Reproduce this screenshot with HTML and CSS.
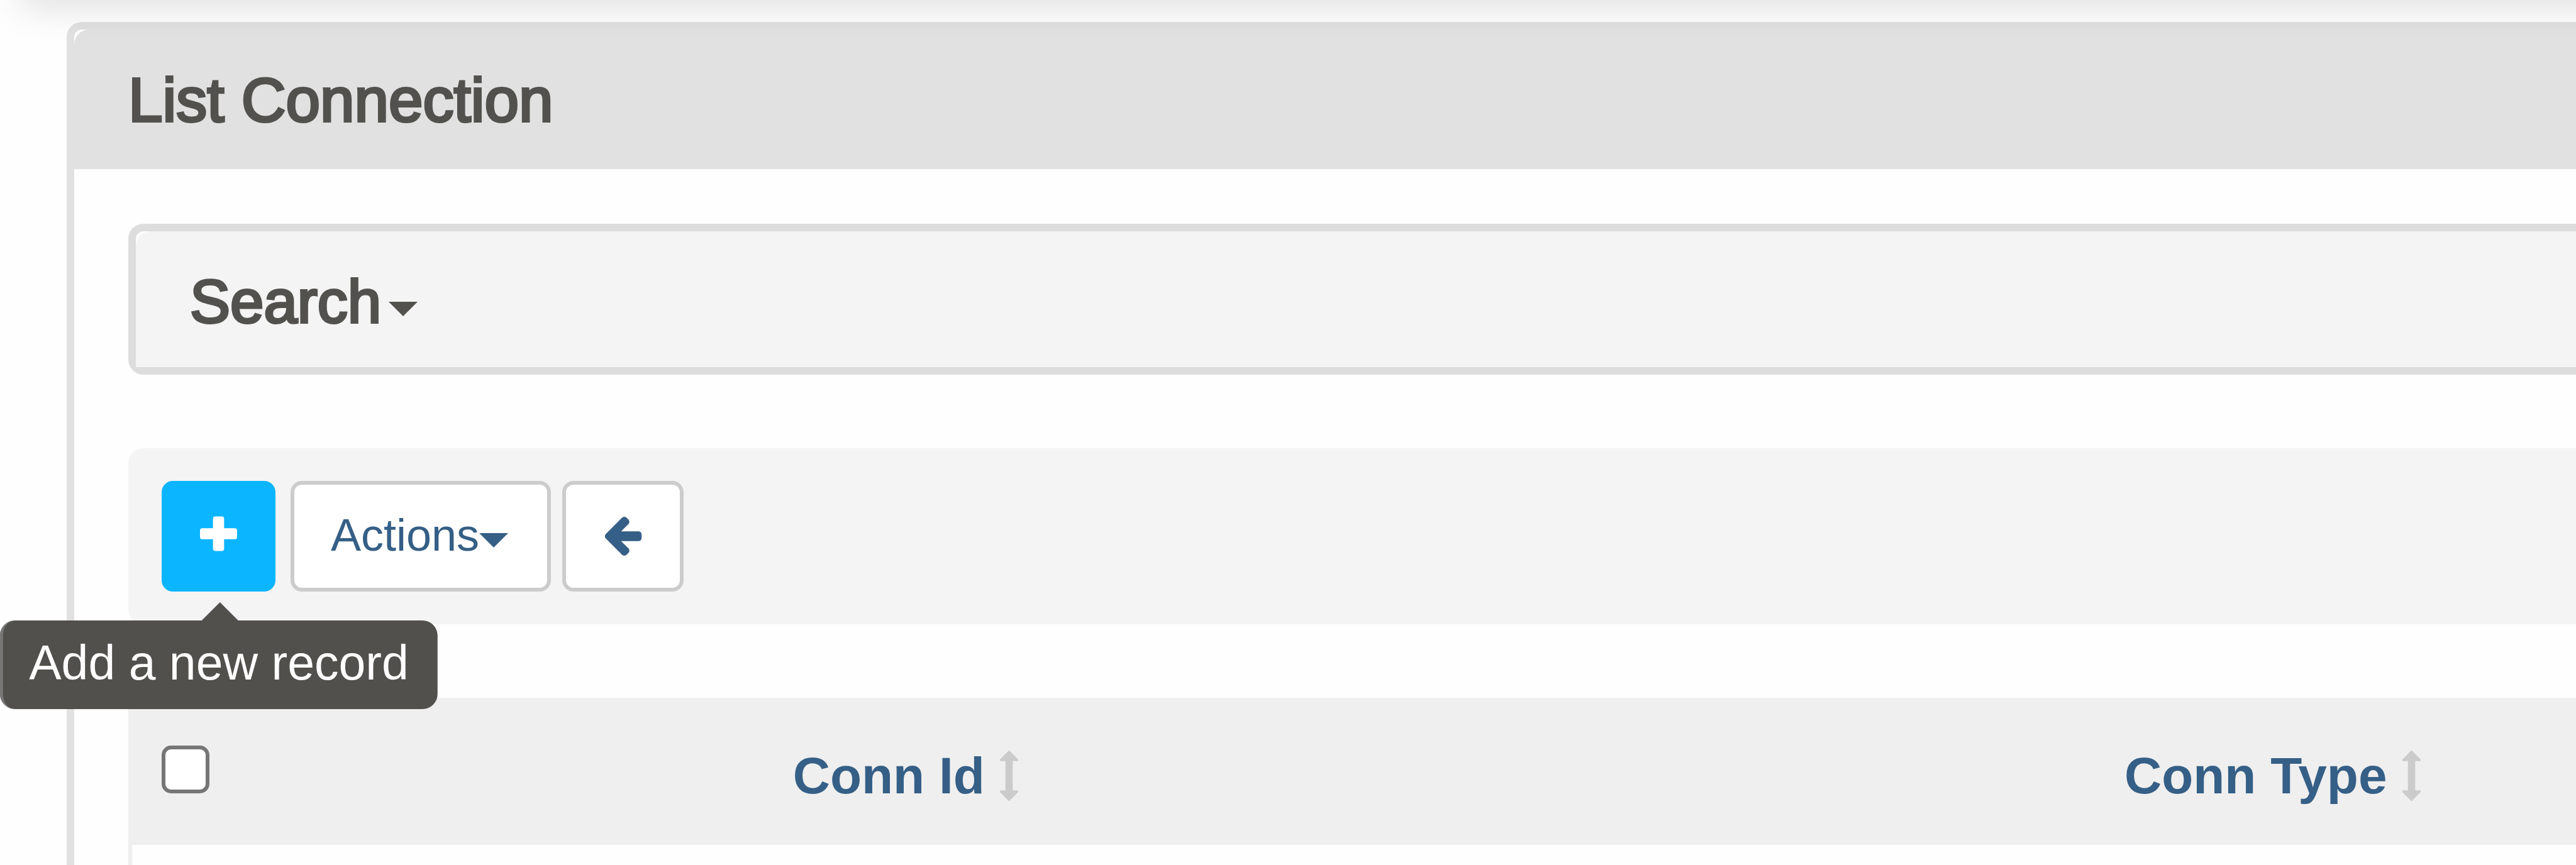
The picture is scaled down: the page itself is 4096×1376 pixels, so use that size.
FILE: index.html
```html
<!DOCTYPE html>
<html lang="en">
<head>
<meta charset="utf-8">
<title>List Connection</title>
<link rel="stylesheet" href="styles.css">
</head>
<body>
<div class="nav-shadow"></div>
<main class="panel">
  <h1 class="panel-title">List Connection</h1>
  <div class="panel-body">
    <div class="search">
      <button type="button" class="search-toggle">Search<span class="caret"></span></button>
    </div>

    <div class="toolbar">
      <div class="add">
        <button type="button" class="btn btn-add" aria-label="Add" aria-describedby="add-tip">
          <svg class="icon-plus" viewBox="0 0 60 56" aria-hidden="true"><path d="M25 0h10q4 0 4 4v15h17q4 0 4 4v10q0 4-4 4H39v15q0 4-4 4H25q-4 0-4-4V37H4q-4 0-4-4V23q0-4 4-4h17V4q0-4 4-4z"/></svg>
        </button>
        <div class="tooltip" id="add-tip" role="tooltip">Add a new record</div>
      </div>
      <button type="button" class="btn btn-actions">Actions<span class="caret"></span></button>
      <button type="button" class="btn btn-back" aria-label="Back">
        <svg class="icon-back" viewBox="64 180 1472 1560" aria-hidden="true"><path d="M1536 896v128q0 53-32.5 90.5t-84.5 37.5h-704l293 294q38 36 38 90t-38 90l-75 76q-37 37-90 37-52 0-91-37l-651-652q-37-37-37-90 0-52 37-91l651-650q38-38 91-38 52 0 90 38l75 74q38 38 38 91t-38 91l-293 293h704q52 0 84.5 37.5t32.5 90.5z"/></svg>
      </button>
    </div>

    <table class="list">
      <thead>
        <tr>
          <th class="col-check"><input type="checkbox" class="check" aria-label="Select all records"></th>
          <th class="col-id"><a class="sort" href="#id">Conn Id<svg class="icon-sort" viewBox="0 0 30 84" aria-hidden="true"><path d="M15 0L30 15V18H21V66H30V69L15 84L0 69V66H9V18H0V15z"/></svg></a></th>
          <th class="col-type"><a class="sort" href="#type">Conn Type<svg class="icon-sort" viewBox="0 0 30 84" aria-hidden="true"><path d="M15 0L30 15V18H21V66H30V69L15 84L0 69V66H9V18H0V15z"/></svg></a></th>
        </tr>
      </thead>
      <tbody>
        <tr><td colspan="3"></td></tr>
      </tbody>
    </table>
  </div>
</main>
</body>
</html>
```
FILE: styles.css
```css
* {
  box-sizing: border-box;
}

body {
  margin: 0;
  padding-top: 35px;
  background: #fefefe;
  color: #52514e;
  font-family: "Liberation Sans", Arial, sans-serif;
  overflow-x: hidden;
}

button {
  font-family: inherit;
  margin: 0;
}

/* shadow cast by the navigation bar above the page */
.nav-shadow {
  position: absolute;
  z-index: 1;
  top: -100px;
  left: 32px;
  right: -100px;
  height: 100px;
  box-shadow: 0 12px 60px rgba(0, 0, 0, 0.12);
  pointer-events: none;
}

.panel {
  margin-left: 106px;
  border: 12px solid #e1e1e1;
  border-width: 12px 0 0 12px;
  border-top-left-radius: 24px;
  background: #fefefe;
}

.panel-title {
  margin: 0;
  padding: 2px 86px 0;
  border-top-left-radius: 24px;
  background: #e1e1e1;
  font-size: 98px;
  font-weight: 400;
  line-height: 220px;
  -webkit-text-stroke: 4px #52514e;
}

.panel-body {
  padding: 87px 0 0 86px;
}

.search {
  border: 12px solid #ddd;
  border-right: 0;
  border-radius: 24px 0 0 24px;
}

.search-toggle {
  display: flex;
  align-items: center;
  width: 100%;
  padding: 8px 86px 0;
  border: 0;
  border-top-left-radius: 24px;
  background: #f4f4f4;
  color: #52514e;
  font-size: 96px;
  line-height: 208px;
  -webkit-text-stroke: 4px #52514e;
}

.caret {
  border: 23px solid transparent;
  border-top-color: currentColor;
  border-bottom: 0;
}

.search-toggle .caret {
  margin: 22px 0 0 12px;
}

.toolbar {
  display: flex;
  margin: 117px 0;
  padding: 52px 53px;
  border-radius: 24px 0 0 24px;
  background: #f4f4f4;
}

.btn {
  display: flex;
  align-items: center;
  justify-content: center;
  height: 176px;
  border: 6px solid #ccc;
  border-radius: 18px;
  background: #fff;
  color: #355f86;
  font-size: 72px;
}

.btn svg {
  fill: currentColor;
}

.add {
  position: relative;
  margin-right: 24px;
}

.btn-add {
  width: 181px;
  padding-bottom: 10px;
  border-color: #0cb5ff;
  background: #0cb5ff;
  color: #fff;
}

.btn-actions {
  margin-right: 18px;
  padding: 0 62px 4px 58px;
}

.btn-actions .caret {
  margin-top: 16px;
}

.btn-back {
  width: 193px;
}

.icon-plus {
  width: 59px;
  height: 56px;
}

.icon-back {
  width: 60px;
  height: 62px;
}

.tooltip {
  position: absolute;
  z-index: 2;
  top: 222px;
  left: 50%;
  transform: translateX(-50%);
  padding: 22px 46px 29px 42px;
  border-left: 5px solid #777;
  border-radius: 24px;
  background: #51504d;
  color: #fff;
  font-size: 77px;
  line-height: 90px;
  white-space: nowrap;
}

.tooltip::before {
  content: "";
  position: absolute;
  bottom: 100%;
  left: 50%;
  margin-left: -29px;
  border: 29px solid transparent;
  border-top: 0;
  border-bottom-color: #51504d;
}

.list {
  width: 100%;
  border-collapse: separate;
  border-spacing: 0;
  table-layout: fixed;
}

.list th {
  height: 234px;
  padding: 14px 0 0 2px;
  background: #efefef;
  text-align: left;
}

.list .col-check {
  width: 27.1%;
  padding: 0 0 6px 53px;
}

.list .col-id {
  width: 54.4%;
}

.list td {
  height: 32px;
  padding: 0;
  border-left: 6px solid #efefef;
}

.check {
  appearance: none;
  display: block;
  width: 76px;
  height: 76px;
  margin: 0;
  border: 6px solid #767676;
  border-radius: 15px;
  background: #fff;
}

.sort {
  display: flex;
  align-items: center;
  gap: 24px;
  color: #355f86;
  font-size: 82px;
  line-height: 96px;
  text-decoration: none;
}

.icon-sort {
  width: 29px;
  height: 82px;
  fill: #cbcbcb;
}
```
